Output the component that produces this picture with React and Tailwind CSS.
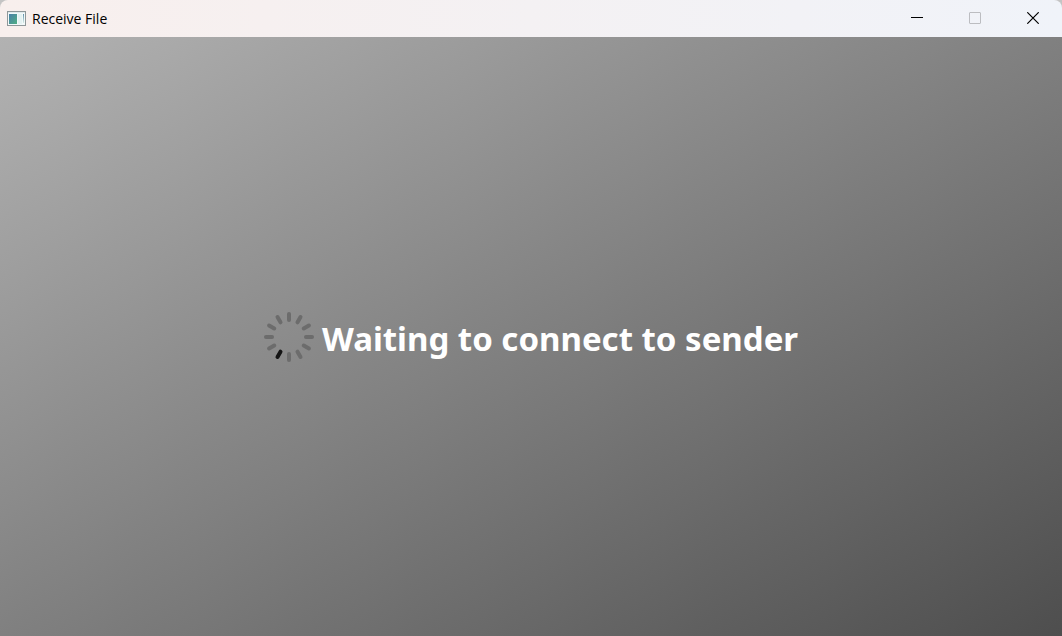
import React from "react";

const SPOKES = [0, 30, 60, 90, 120, 150, 180, 210, 240, 270, 300, 330];
const ACTIVE_SPOKE = 210;

function WindowIcon() {
  return (
    <svg width="20" height="18" viewBox="0 0 20 18" aria-hidden="true">
      <defs>
        <linearGradient id="pane" x1="0" y1="0" x2="1" y2="1">
          <stop offset="0" stopColor="#4a7fa8" />
          <stop offset="1" stopColor="#4fae84" />
        </linearGradient>
        <linearGradient id="side" x1="0" y1="0" x2="0" y2="1">
          <stop offset="0" stopColor="#5f8fa8" />
          <stop offset="1" stopColor="#d5ebe6" />
        </linearGradient>
      </defs>
      <rect x="0.5" y="1.5" width="18" height="14" fill="#f2f8f9" stroke="#8f9799" />
      <rect x="1" y="2" width="17" height="1" fill="#dfe9ec" />
      <rect x="2" y="4" width="8" height="10" fill="url(#pane)" />
      <rect x="11" y="4" width="4" height="10" fill="#e4f2f2" />
      <rect x="16" y="4" width="1" height="9" fill="url(#side)" />
    </svg>
  );
}

function Spinner() {
  return (
    <svg width="50" height="50" viewBox="0 0 50 50" role="img" aria-label="Loading">
      {SPOKES.map((angle) => (
        <line
          key={angle}
          x1="25"
          y1="2"
          x2="25"
          y2="8"
          stroke={angle === ACTIVE_SPOKE ? "#141414" : "#6c6c6c"}
          strokeWidth="4"
          strokeLinecap="round"
          transform={`rotate(${angle} 25 25)`}
        />
      ))}
    </svg>
  );
}

export default function App() {
  return (
    <div className="bg-[#c4c4c4] font-['Noto_Sans',sans-serif]">
      <div className="flex min-h-screen flex-col overflow-hidden rounded-t-lg">
        <header className="flex h-[37px] shrink-0 items-center justify-between bg-linear-to-r from-[#f8efed] to-[#f0f3f9] pl-[7px]">
          <div className="flex items-center gap-[5px]">
            <WindowIcon />
            <h1 className="font-['Open_Sans',sans-serif] text-sm text-black">Receive File</h1>
          </div>
          <div className="flex h-full pb-px">
            <button type="button" aria-label="Minimize" className="flex w-[58px] items-center justify-center">
              <svg width="12" height="12" viewBox="0 0 12 12">
                <path d="M0 5.5H12" stroke="#000" />
              </svg>
            </button>
            <button type="button" aria-label="Maximize" disabled className="flex w-[58px] items-center justify-center">
              <svg width="12" height="12" viewBox="0 0 12 12">
                <rect x="0.5" y="0.5" width="11" height="11" rx="0.5" fill="none" stroke="#bcbdc1" />
              </svg>
            </button>
            <button type="button" aria-label="Close" className="flex w-[58px] items-center justify-center">
              <svg width="12" height="12" viewBox="0 0 12 12">
                <path d="M0.3 0.3L11.7 11.7M11.7 0.3L0.3 11.7" stroke="#000" strokeWidth="1.2" />
              </svg>
            </button>
          </div>
        </header>
        <main className="flex grow items-center justify-center gap-2 bg-linear-[to_bottom_right] from-[#b2b2b2] to-[#4e4e4e]">
          <Spinner />
          <p className="pt-1 text-[33px] font-bold text-white">Waiting to connect to sender</p>
        </main>
      </div>
    </div>
  );
}
